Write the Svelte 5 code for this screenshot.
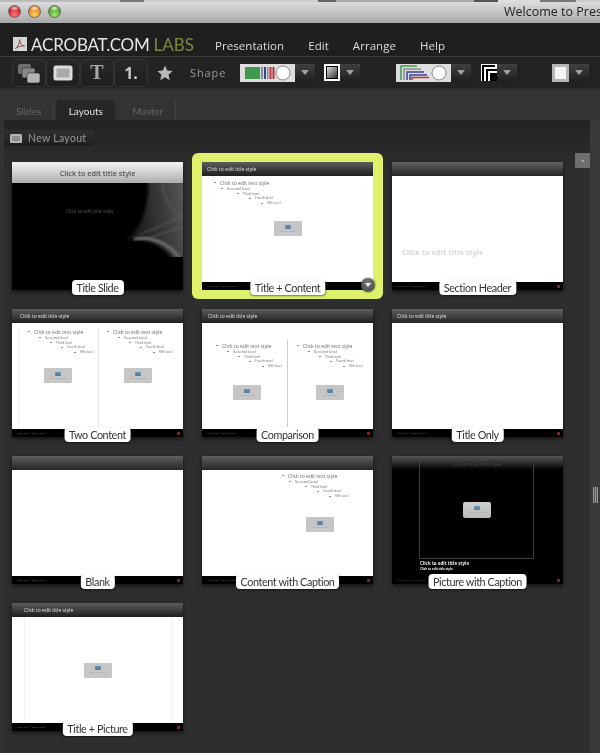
<script>
  const menus = ["Presentation", "Edit", "Arrange", "Help"];
  const levels = ["Click to edit text style", "Second level", "Third level", "Fourth level", "Fifth level"];

  const layouts = [
    { name: "Title Slide", kind: "cover" },
    { name: "Title + Content", kind: "content", title: 5, selected: true },
    { name: "Section Header", kind: "section" },
    { name: "Two Content", kind: "two", title: 8 },
    { name: "Comparison", kind: "compare", title: 6 },
    { name: "Title Only", kind: "plain", title: 5 },
    { name: "Blank", kind: "plain" },
    { name: "Content with Caption", kind: "caption" },
    { name: "Picture with Caption", kind: "picture" },
    { name: "Title + Picture", kind: "titlepic", title: 12 }
  ];
</script>

{#snippet bullets()}
  <ul class="bullets">
    {#each levels as text, i}
      <li class="lv{i}">{text}</li>
    {/each}
  </ul>
{/snippet}

{#snippet holder()}
  <div class="holder">
    <svg width="6" height="4" viewBox="0 0 6 4"><rect width="6" height="4" rx="0.5" fill="#5f8fb4" /><rect x="1" y="2.500" width="4" height="1" fill="#48708f" /></svg>
    <span>Click icon to add</span>
  </div>
{/snippet}

{#snippet caret()}
  <span class="caret"><i></i></span>
{/snippet}

<div class="window">
  <div class="noise"></div>
  <header class="titlebar">
    <span class="light red"></span>
    <span class="light amber"></span>
    <span class="light green"></span>
    <span class="wintitle">Welcome to Pres</span>
  </header>

  <div class="chrome">
    <div class="menubar">
      <svg class="pdf" width="14" height="14" viewBox="0 0 14 14">
        <rect width="14" height="14" fill="#d6d6d6" />
        <path d="M2.5 11.5C5 9.5 7 5.5 6.5 2.5C6.8 6 8.5 8.5 11.5 9C8.5 8.7 5.500 9.5 2.5 11.5Z" fill="none" stroke="#8f4a4a" stroke-width="1" />
      </svg>
      <span class="brand">ACROBAT.COM</span>
      <span class="labs">LABS</span>
      <nav class="menus">
        {#each menus as m}
          <span>{m}</span>
        {/each}
      </nav>
    </div>

    <div class="toolbar">
      <div class="tools">
        <button class="tool">
          <svg width="24" height="22" viewBox="0 0 24 22">
            <rect x="1" y="2" width="13" height="10" rx="2" fill="#6f6f6f" />
            <rect x="5" y="6" width="13" height="10" rx="2" fill="#8a8a8a" stroke="#222" stroke-width="0.6" />
            <rect x="10" y="11" width="13" height="10" rx="2" fill="#b5b5b5" stroke="#222" stroke-width="0.6" />
          </svg>
        </button>
        <button class="tool">
          <svg width="20" height="16" viewBox="0 0 20 16">
            <rect x="0.5" y="0.5" width="19" height="15" rx="2.5" fill="#dcdcdc" />
            <rect x="3.5" y="3.5" width="13" height="9" fill="#aaa" />
          </svg>
        </button>
        <button class="tool serif">T</button>
        <button class="tool num">1.</button>
      </div>
      <svg class="star" width="16" height="16" viewBox="0 0 16 16">
        <path d="M8 0.5L10.2 5.6L15.6 6.1L11.5 9.7L12.8 15.2L8 12.3L3.2 15.2L4.5 9.7L0.4 6.1L5.8 5.6Z" fill="#b8b8b8" />
      </svg>
      <span class="shape">Shape</span>

      <div class="combo first">
        <svg width="55" height="18" viewBox="0 0 55 18">
          <rect width="55" height="18" fill="#dedede" />
          <rect x="5" y="3" width="15" height="12" fill="#3f9a4d" />
          <rect x="21" y="3" width="2" height="12" fill="#8a8a8a" />
          <rect x="24" y="3" width="2" height="12" fill="#34449a" />
          <rect x="27" y="3" width="1.5" height="12" fill="#8a8a8a" />
          <rect x="29.5" y="3" width="2" height="12" fill="#b5303c" />
          <rect x="32.5" y="3" width="2" height="12" fill="#b5303c" />
          <circle cx="43" cy="9" r="7" fill="#fff" stroke="#8a8a8a" />
        </svg>
        {@render caret()}
      </div>
      <div class="combo second">
        <span class="gradswatch"></span>
        {@render caret()}
      </div>
      <div class="combo third">
        <svg width="55" height="18" viewBox="0 0 55 18">
          <rect width="55" height="18" fill="#dedede" />
          <path d="M5 16V2H21" fill="none" stroke="#3f9a4d" stroke-width="1.5" />
          <path d="M8 16V5H25" fill="none" stroke="#8a8a8a" stroke-width="1.5" />
          <path d="M11 16V8H28" fill="none" stroke="#34449a" stroke-width="1.5" />
          <path d="M14 16V11H31" fill="none" stroke="#34449a" stroke-width="1.5" />
          <path d="M16 16V13.500H33" fill="none" stroke="#c0303c" stroke-width="1.5" />
          <circle cx="43" cy="9" r="7" fill="#fff" stroke="#8a8a8a" />
        </svg>
        {@render caret()}
      </div>
      <div class="combo fourth">
        <svg width="16" height="17" viewBox="0 0 16 17">
          <rect width="16" height="17" fill="#fff" />
          <path d="M2 17V2H14" fill="none" stroke="#000" stroke-width="2" />
          <path d="M6 17V6H16" fill="none" stroke="#000" stroke-width="2" />
          <rect x="9" y="9" width="7" height="8" fill="#000" />
        </svg>
        {@render caret()}
      </div>
      <div class="combo fifth">
        <span class="fillswatch"></span>
        {@render caret()}
      </div>
    </div>
  </div>

  <div class="tabs">
    <span class="tab">Slides</span>
    <span class="tab active">Layouts</span>
    <span class="tab">Master</span>
  </div>

  <div class="body">
    <main class="panel">
      <div class="content">
        <button class="newlayout">
          <svg width="12" height="9" viewBox="0 0 12 9"><rect width="12" height="9" rx="1.5" fill="#b5b5b5" /><rect x="2" y="2" width="8" height="5" fill="#8d8d8d" /></svg>
          New Layout
        </button>

        <div class="grid">
          {#each layouts as l}
            <div class="thumb {l.kind}" class:selected={l.selected}>
              <div class="slide-head">
                {#if l.kind === "cover"}
                  <span class="cover-title">Click to edit title style</span>
                {:else if l.title}
                  <span class="head-title" style="margin-left: {l.title}px">Click to edit title style</span>
                {/if}
              </div>

              <div class="slide-body">
                {#if l.kind === "cover"}
                  <svg class="swirl" width="171" height="107" viewBox="0 0 171 107">
                    <defs>
                      <linearGradient id="sw" x1="0" y1="0.4" x2="1" y2="0.2">
                        <stop offset="0" stop-color="#111" />
                        <stop offset="0.6" stop-color="#3a3a3a" />
                        <stop offset="1" stop-color="#5a5a5a" />
                      </linearGradient>
                      <filter id="soft"><feGaussianBlur stdDeviation="1.6" /></filter>
                      <filter id="softer"><feGaussianBlur stdDeviation="0.9" /></filter>
                      <clipPath id="cut"><rect width="171" height="74" /></clipPath>
                    </defs>
                    <g clip-path="url(#cut)">
                      <path d="M112 57C128 50 138 25 136 -4H175V78H163C150 60 130 54 112 57Z" fill="url(#sw)" filter="url(#soft)" />
                      <path d="M122 56C140 53 156 60 167 74" fill="none" stroke="#707070" stroke-width="3" filter="url(#softer)" />
                      <path d="M126 52C140 47 156 40 171 33M130 56C145 53 158 48 171 44M150 0C152 18 160 28 171 34" fill="none" stroke="#666" stroke-width="0.9" filter="url(#softer)" />
                    </g>
                  </svg>
                  <span class="cover-sub">Click to edit title style</span>
                {:else if l.kind === "content"}
                  {@render bullets()}
                  <div class="center">{@render holder()}</div>
                {:else if l.kind === "section"}
                  <span class="section-title">Click to edit title style</span>
                {:else if l.kind === "two" || l.kind === "compare"}
                  <div class="cols">
                    <div class="col">{@render bullets()}{@render holder()}</div>
                    <div class="col">{@render bullets()}{@render holder()}</div>
                  </div>
                {:else if l.kind === "caption"}
                  <div class="side">{@render bullets()}{@render holder()}</div>
                {:else if l.kind === "picture"}
                  <div class="frame">
                    <span class="frame-title">Click to edit title style</span>
                    {@render holder()}
                  </div>
                  <span class="pic-title">Click to edit title style</span>
                  <span class="pic-sub">Click to edit title style</span>
                {:else if l.kind === "titlepic"}
                  <div class="picarea">{@render holder()}</div>
                {/if}
              </div>

              {#if l.kind !== "cover"}
                <div class="slide-foot">
                  <span>Copyright © 2008 Adobe</span>
                  <i></i>
                </div>
              {/if}

              <span class="label">{l.name}</span>
              {#if l.selected}
                <span class="more"><i></i></span>
              {/if}
            </div>
          {/each}
        </div>
      </div>
      <div class="rail">
        <span class="rail-btn"><i></i></span>
      </div>
    </main>
    <aside class="strip"><span class="grip"></span></aside>
  </div>
</div>

<style>
  :global(body) {
    margin: 0;
    background: #333;
  }

  .window {
    width: 600px;
    height: 753px;
    overflow: hidden;
    display: flex;
    flex-direction: column;
    background: #333;
    font-family: Lato, "Open Sans", sans-serif;
    filter: blur(0.4px);
  }

  .noise {
    height: 2px;
    background: linear-gradient(90deg, #bbb 0 20%, #777 20% 24%, #ccc 24% 53%, #666 53% 56%, #aaa 56% 79%, #555 79% 83%, #ddd 83% 90%, #777 90% 96%, #ccc 96%);
  }

  .titlebar {
    height: 21px;
    display: flex;
    align-items: center;
    padding-left: 8px;
    gap: 7px;
    background: linear-gradient(#dcdcdc, #a9a9a9);
  }
  .light {
    width: 13px;
    height: 13px;
    border-radius: 50%;
    box-sizing: border-box;
    border: 1px solid #666;
    margin-top: -3px;
  }
  .red { background: radial-gradient(ellipse 5px 3px at 50% 20%, #ffd0d0, transparent), radial-gradient(circle at 50% 80%, #ff7f7f 0, #d4232a 60%, #8e1015 100%); }
  .amber { background: radial-gradient(ellipse 5px 3px at 50% 20%, #ffeccc, transparent), radial-gradient(circle at 50% 80%, #ffd070 0, #e98a1f 60%, #a55c10 100%); }
  .green { background: radial-gradient(ellipse 5px 3px at 50% 20%, #e4ffd0, transparent), radial-gradient(circle at 50% 80%, #a8ea70 0, #4fa92b 60%, #2f7518 100%); }

  .wintitle {
    margin-left: auto;
    width: 96px;
    white-space: nowrap;
    font: 12.500px "Open Sans", sans-serif;
    color: #222;
    margin-top: -2px;
  }

  .chrome {
    height: 67px;
    background: #1f1f1f;
    display: flex;
    flex-direction: column;
  }

  .menubar {
    height: 34px;
    display: flex;
    align-items: center;
    padding-left: 13px;
    box-sizing: border-box;
    border-bottom: 1px solid #3a3a3a;
    padding-top: 9px;
  }
  .pdf { flex: none; }
  .brand {
    margin-left: 4px;
    font-size: 17px;
    color: #e6e6e6;
    letter-spacing: -0.2px;
  }
  .labs {
    margin-left: 4px;
    font-size: 17px;
    color: #7b8a3f;
  }
  .menus {
    margin: 3px 0 0 21px;
    display: flex;
    gap: 24px;
    font: 11.500px "Open Sans", sans-serif;
    letter-spacing: 0.05px;
    color: #ddd;
  }

  .toolbar {
    flex: 1;
    display: flex;
    align-items: center;
    padding-left: 12px;
    background: #232323;
    border-bottom: 2px solid #2b2b2b;
    box-sizing: border-box;
  }
  .tools {
    display: flex;
  }
  .tool {
    width: 34px;
    height: 28px;
    padding: 0;
    display: flex;
    align-items: center;
    justify-content: center;
    background: linear-gradient(#272727, #1f1f1f);
    border: 1px solid #333;
    border-radius: 4px;
    color: #bdbdbd;
  }
  .serif {
    font: bold 20px "Liberation Serif", serif;
    color: #a8a8a8;
  }
  .num {
    font: bold 16px "Open Sans", sans-serif;
    color: #c8c8c8;
  }
  .star {
    margin-left: 9px;
    flex: none;
  }
  .shape {
    margin-left: 17px;
    width: 50px;
    font: 11px "Open Sans", sans-serif;
    letter-spacing: 0.9px;
    color: #999;
  }

  .combo {
    display: flex;
    align-items: center;
    height: 18px;
  }
  .combo.second { margin-left: 9px; }
  .combo.third { margin-left: 36px; }
  .combo.fourth { margin-left: 10px; }
  .combo.fifth { margin-left: 35px; }
  .caret {
    width: 20px;
    height: 18px;
    display: flex;
    align-items: center;
    justify-content: center;
    background: linear-gradient(#404040, #1e1e1e);
  }
  .caret i {
    border-left: 4px solid transparent;
    border-right: 4px solid transparent;
    border-top: 5px solid #a0a0a0;
  }
  .gradswatch {
    width: 16px;
    height: 17px;
    box-sizing: border-box;
    border: 2px solid #fff;
    outline: 1px solid #000;
    outline-offset: -3px;
    background: linear-gradient(135deg, #eee, #222);
  }
  .fillswatch {
    width: 17px;
    height: 18px;
    box-sizing: border-box;
    border: 3px solid #b5b5b5;
    background: #f4f4f4;
  }

  .tabs {
    height: 30px;
    box-sizing: border-box;
    padding: 10px 0 0 12px;
    display: flex;
    font-size: 10px;
  }
  .tab {
    height: 20px;
    line-height: 22px;
    padding: 0 12px 0 4px;
    color: #666;
    border-right: 1px solid #444;
  }
  .tab:first-child {
    margin-right: 2px;
  }
  .tab.active {
    width: 59px;
    box-sizing: border-box;
    padding: 0;
    text-align: center;
    color: #e2e2e2;
    background: #272727;
    border-right: none;
    border-radius: 4px 4px 0 0;
    margin-right: 13px;
  }

  .body {
    flex: 1;
    display: flex;
    min-height: 0;
  }
  .panel {
    flex: 1;
    margin-left: 4px;
    display: flex;
    background: linear-gradient(#232323, #2e2e2e 50px);
  }
  .content {
    flex: 1;
  }
  .newlayout {
    margin-top: 10px;
    width: 90px;
    height: 16px;
    padding: 0 0 0 6px;
    display: flex;
    align-items: center;
    gap: 6px;
    border: none;
    border-radius: 3px;
    background: linear-gradient(#303030, #1e1e1e);
    color: #999;
    font: 10.500px Lato, sans-serif;
    letter-spacing: 0.3px;
  }

  .grid {
    margin: 16px 0 0 8px;
    display: grid;
    grid-template-columns: repeat(3, 171px);
    grid-auto-rows: 128px;
    column-gap: 19px;
    row-gap: 19px;
  }

  .thumb {
    position: relative;
    z-index: 0;
    display: flex;
    flex-direction: column;
    background: #fff;
    box-shadow: 0 2px 4px rgba(0, 0, 0, 0.6);
  }
  .thumb.selected::before {
    content: "";
    position: absolute;
    inset: -9px -10px;
    z-index: -1;
    border-radius: 6px;
    background: #dff06b;
  }

  .slide-head {
    height: 14px;
    flex: none;
    display: flex;
    align-items: center;
    background: linear-gradient(#5c5c5c, #1e1e1e);
  }
  .head-title {
    font: 5px "Open Sans", sans-serif;
    color: #e4e4e4;
  }
  .slide-body {
    flex: 1;
    position: relative;
    background: #fff;
    min-height: 0;
  }
  .slide-foot {
    height: 8px;
    flex: none;
    display: flex;
    align-items: center;
    justify-content: space-between;
    padding: 0 3px 0 5px;
    background: #000;
    font: 2.500px "Open Sans", sans-serif;
    color: #666;
    white-space: nowrap;
  }
  .slide-foot i {
    width: 3px;
    height: 3px;
    background: #8c1c24;
  }

  .bullets {
    margin: 0;
    padding: 0;
    list-style: none;
    font-family: "Open Sans", sans-serif;
    color: #666;
    white-space: nowrap;
  }
  .bullets li {
    height: 5px;
    line-height: 5px;
    position: relative;
  }
  .bullets li::before {
    content: "";
    position: absolute;
    top: 2px;
    left: -6px;
    width: 2px;
    height: 1px;
    background: #888;
  }
  .lv0 { font-size: 5px; height: 6px !important; line-height: 6px !important; }
  .lv1 { font-size: 4px; margin-left: 7px; }
  .lv2 { font-size: 3.400px; margin-left: 23px; }
  .lv3 { font-size: 3.200px; margin-left: 35px; }
  .lv4 { font-size: 3px; margin-left: 47px; }

  .two .lv1, .compare .lv1 { margin-left: 11px; }
  .two .lv2, .compare .lv2 { margin-left: 22px; }
  .two .lv3, .compare .lv3 { margin-left: 33px; }
  .two .lv4, .compare .lv4 { margin-left: 46px; }

  .holder {
    width: 28px;
    height: 15px;
    flex: none;
    display: flex;
    flex-direction: column;
    align-items: center;
    justify-content: center;
    gap: 1px;
    border-radius: 1px;
    background: #c6c6c6;
    font: 2px "Open Sans", sans-serif;
    color: #999;
    white-space: nowrap;
  }

  .center {
    display: flex;
    justify-content: center;
    margin-top: 15px;
  }

  .thumb.content .bullets {
    padding: 4px 0 0 18px;
  }

  .cols {
    height: 100%;
    display: flex;
  }
  .col {
    box-sizing: border-box;
  }
  .two .cols {
    padding: 5px 0 0 0;
    box-sizing: border-box;
  }
  .two .col {
    height: 100%;
    width: 80px;
    margin-left: 6px;
    border-left: 1px solid #f1f1f1;
    padding-top: 1px;
  }
  .two .col + .col {
    margin-left: 0;
    width: 73px;
    border-left: 1px solid #e4e4e4;
  }
  .two .bullets { padding-left: 15px; }
  .two .col + .col .bullets { padding-left: 14px; }
  .two .holder { margin: 13px 0 0 25px; }

  .compare .col {
    height: 100%;
    width: 85px;
    padding: 20px 0 0 20px;
  }
  .compare .col + .col {
    width: 86px;
    height: auto;
    margin-top: 17px;
    padding: 3px 0 0 15px;
    border-left: 1px solid #cfcfcf;
  }
  .compare .holder { margin: 16px 0 0 11px; }
  .compare .col + .col .holder { margin-left: 13px; }

  .caption .side {
    margin-left: 86px;
    padding-top: 3px;
  }
  .caption .holder { margin: 18px 0 0 18px; }

  .section-title {
    display: block;
    padding: 71px 0 0 10px;
    font: bold 7.500px "Open Sans", sans-serif;
    color: #d8d8d8;
    white-space: nowrap;
  }
  .section .slide-head,
  .plain .slide-head,
  .caption .slide-head {
    background: linear-gradient(#606060, #252525);
  }

  .cover {
    background: #000;
  }
  .cover .slide-head {
    height: 21px;
    justify-content: center;
    background: linear-gradient(#f4f4f4, #adadad);
  }
  .cover-title {
    font: 600 7.300px "Open Sans", sans-serif;
    color: #555;
  }
  .cover .slide-body {
    background: #000;
  }
  .swirl {
    position: absolute;
    inset: 0;
  }
  .cover-sub {
    position: absolute;
    left: 54px;
    top: 25px;
    font: 4.800px "Open Sans", sans-serif;
    color: #5a5a5a;
    white-space: nowrap;
  }

  .picture .slide-body {
    background: #000;
  }
  .picture .slide-head {
    background: linear-gradient(#555, #000);
  }
  .picture .slide-foot {
    color: #444;
  }
  .frame {
    position: absolute;
    left: 27px;
    top: -10px;
    width: 115px;
    height: 99px;
    box-sizing: border-box;
    border: 1px solid #3d3d3d;
    display: flex;
    flex-direction: column;
    align-items: center;
  }
  .frame-title {
    font: 5px "Open Sans", sans-serif;
    color: #444;
    height: 41px;
  }
  .frame .holder {
    background: linear-gradient(#d0d0d0, #bbb);
    height: 16px;
    border-radius: 2px;
  }
  .pic-title,
  .pic-sub {
    position: absolute;
    left: 28px;
    color: #eee;
    font-family: "Open Sans", sans-serif;
    font-weight: bold;
    white-space: nowrap;
  }
  .pic-title {
    top: 90px;
    font-size: 4.500px;
  }
  .pic-sub {
    top: 97px;
    font-size: 3px;
  }

  .picarea {
    height: 100%;
    margin: 0 11px 0 12px;
    border-left: 1px solid #f2f2f2;
    border-right: 1px solid #f2f2f2;
    display: flex;
    flex-direction: column;
    align-items: center;
    justify-content: center;
  }

  .label {
    position: absolute;
    left: 50%;
    bottom: -5px;
    transform: translateX(-50%);
    padding: 0 5px;
    height: 15px;
    border-radius: 4px;
    background: #fff;
    color: #333;
    font: 10.800px/15px Lato, sans-serif;
    letter-spacing: -0.4px;
    white-space: nowrap;
    box-shadow: 0 1px 2px rgba(0, 0, 0, 0.5);
  }

  .more {
    position: absolute;
    right: -2px;
    bottom: -2px;
    width: 14px;
    height: 14px;
    border-radius: 50%;
    display: flex;
    align-items: center;
    justify-content: center;
    background: radial-gradient(circle at 50% 30%, #777, #444);
    box-shadow: 0 0 2px rgba(0, 0, 0, 0.7);
  }
  .more i {
    border-left: 3.500px solid transparent;
    border-right: 3.500px solid transparent;
    border-top: 4px solid #eee;
  }

  .rail {
    width: 15px;
    padding-top: 33px;
  }
  .rail-btn {
    width: 15px;
    height: 15px;
    display: flex;
    align-items: center;
    justify-content: center;
    background: #6e6e6e;
  }
  .rail-btn i {
    border-left: 2px solid transparent;
    border-right: 2px solid transparent;
    border-bottom: 3px solid #a5a5a5;
  }

  .strip {
    width: 10px;
    background: #3a3a3a;
    padding-top: 367px;
    box-sizing: border-box;
    display: flex;
    justify-content: center;
    align-items: flex-start;
  }
  .grip {
    width: 5px;
    height: 16px;
    background: repeating-linear-gradient(90deg, #9a9a9a 0 1px, #555 1px 2px);
  }
</style>
